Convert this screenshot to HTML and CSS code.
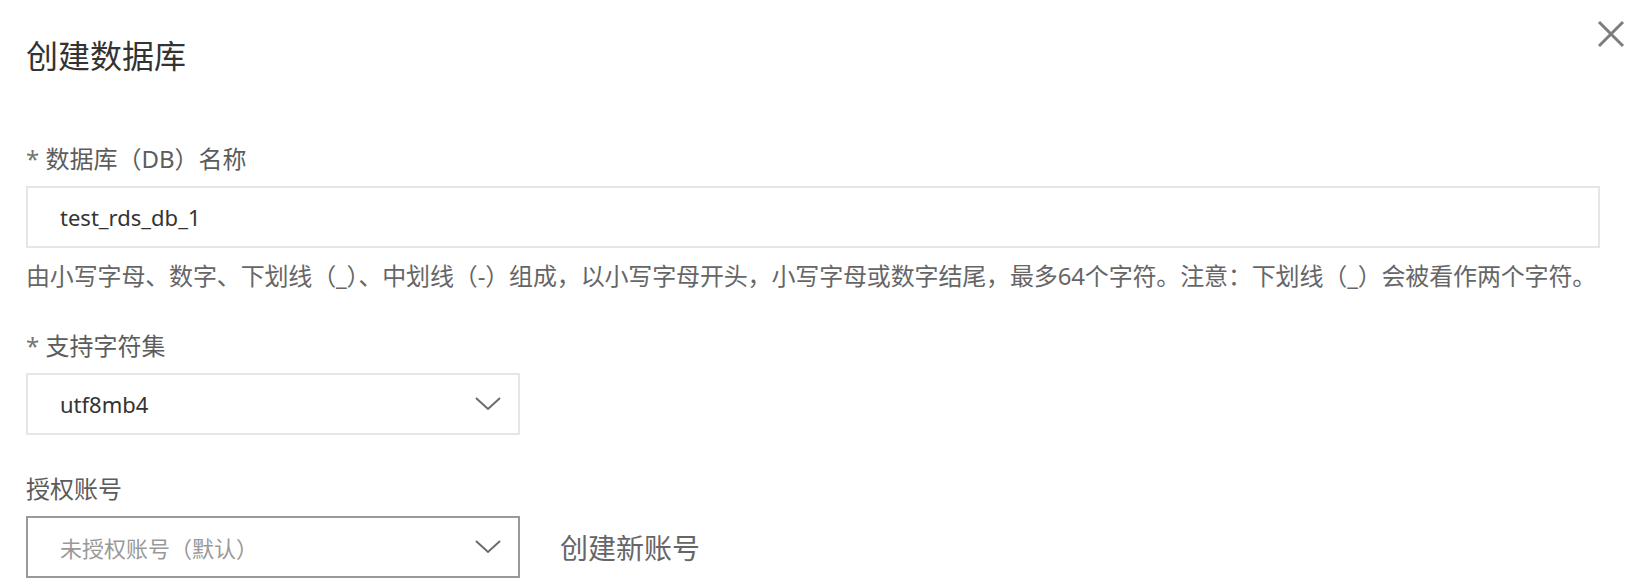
FILE: index.html
```html
<!DOCTYPE html>
<html lang="zh-CN">
<head>
  <meta charset="UTF-8">
  <title>创建数据库</title>
  <link rel="stylesheet" href="styles.css">
</head>
<body>
  <div class="dialog">
    <h2 class="title">创建数据库</h2>
    <button class="close" aria-label="关闭">
      <svg width="28" height="28" viewBox="0 0 28 28">
        <path d="M2 2 L26 26 M26 2 L2 26" stroke="#7d7d7d" stroke-width="3" fill="none"/>
      </svg>
    </button>

    <div class="field">
      <div class="label"><span class="req">*</span> 数据库（DB）名称</div>
      <div class="input">test_rds_db_1</div>
      <p class="help">由小写字母、数字、下划线（_）、中划线（-）组成，以小写字母开头，小写字母或数字结尾，最多64个字符。注意：下划线（_）会被看作两个字符。</p>
    </div>

    <div class="field">
      <div class="label"><span class="req">*</span> 支持字符集</div>
      <div class="select">
        <span>utf8mb4</span>
        <svg class="arrow" width="26" height="14" viewBox="0 0 26 14">
          <path d="M1 1 L13 12 L25 1" stroke="#6b6b6b" stroke-width="2" fill="none"/>
        </svg>
      </div>
    </div>

    <div class="field">
      <div class="label">授权账号</div>
      <div class="row">
        <div class="select select-active">
          <span class="placeholder">未授权账号（默认）</span>
          <svg class="arrow" width="26" height="14" viewBox="0 0 26 14">
            <path d="M1 1 L13 12 L25 1" stroke="#6b6b6b" stroke-width="2" fill="none"/>
          </svg>
        </div>
        <a class="link">创建新账号</a>
      </div>
    </div>
  </div>
</body>
</html>
```

FILE: styles.css
```css
body {
  margin: 0;
  background: #fff;
  color: #333;
  font-family: 'Noto Sans', 'Noto Sans CJK SC', sans-serif;
}

.dialog {
  position: relative;
  padding: 34px 37px 0 26px;
}

.title {
  margin: 0;
  font-size: 32px;
  line-height: 44px;
  font-weight: normal;
  color: #333;
}

.close {
  position: absolute;
  top: 20px;
  right: 12px;
  padding: 0;
  border: none;
  background: none;
  cursor: pointer;
}

.close svg {
  display: block;
}

.field {
  margin-top: 38px;
}

.dialog .field:first-of-type {
  margin-top: 65px;
}

.label {
  font-size: 24px;
  line-height: 32px;
  color: #5c5c5c;
  margin-bottom: 11px;
}

.req {
  color: #777;
}

.input {
  height: 58px;
  border: 2px solid #e6e6e6;
  padding-left: 32px;
  display: flex;
  align-items: center;
  font-size: 22px;
  color: #333;
}

.help {
  margin: 12px 0 0;
  font-size: 24px;
  line-height: 32px;
  color: #666;
  white-space: nowrap;
  letter-spacing: -0.15px;
}

.select {
  box-sizing: border-box;
  width: 494px;
  height: 62px;
  border: 2px solid #e6e6e6;
  padding: 0 17px 0 32px;
  display: flex;
  align-items: center;
  justify-content: space-between;
  font-size: 22px;
  color: #333;
}

.select-active {
  border-color: #999;
}

.placeholder {
  color: #999;
}

.row {
  display: flex;
  align-items: center;
}

.link {
  margin-left: 40px;
  font-size: 28px;
  color: #666;
  cursor: pointer;
}
```
